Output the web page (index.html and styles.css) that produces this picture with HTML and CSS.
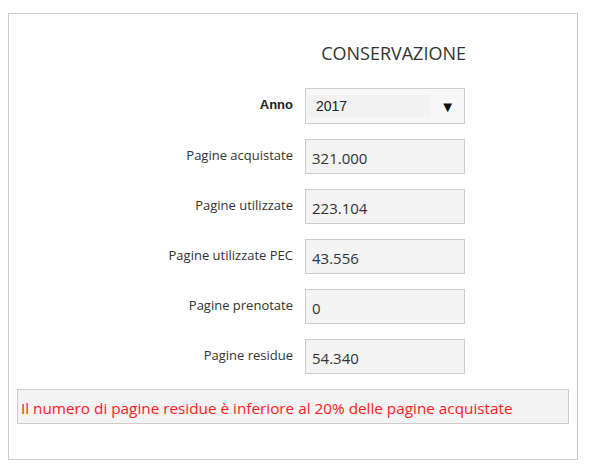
FILE: index.html
```html
<!DOCTYPE html>
<html lang="it">

<head>
    <meta charset="UTF-8">
    <meta name="viewport" content="width=device-width, initial-scale=1.0">
    <title>Conservazione</title>
    <link rel="stylesheet" href="styles.css">
</head>

<body>
    <div class="panel">
        <div class="form">
            <h2 class="title">CONSERVAZIONE</h2>

            <label class="label label-strong" for="anno">Anno</label>
            <div class="select" id="anno">
                <span class="select-value">2017</span>
                <span class="select-arrow">&#9660;</span>
            </div>

            <label class="label">Pagine acquistate</label>
            <div class="field">321.000</div>

            <label class="label">Pagine utilizzate</label>
            <div class="field">223.104</div>

            <label class="label">Pagine utilizzate PEC</label>
            <div class="field">43.556</div>

            <label class="label">Pagine prenotate</label>
            <div class="field">0</div>

            <label class="label">Pagine residue</label>
            <div class="field">54.340</div>
        </div>

        <div class="warning">Il numero di pagine residue è inferiore al 20% delle pagine acquistate</div>
    </div>
</body>

</html>
```

FILE: styles.css
```css
/* CSS Reset */
* {
    margin: 0;
    padding: 0;
    box-sizing: border-box;
}

body {
    font-family: 'Open Sans', sans-serif;
    background-color: #fff;
    color: #333;
}

.panel {
    margin: 13px 0 0 8px;
    width: 570px;
    height: 447px;
    border: 1px solid #ccc;
    padding: 0 8px;
}

.form {
    display: grid;
    grid-template-columns: 1fr 160px;
    column-gap: 12px;
    row-gap: 15px;
    padding-right: 104px;
}

.title {
    grid-column: 2;
    justify-self: end;
    margin: 27px -1px 8px 0;
    font-size: 18px;
    font-weight: 400;
    line-height: 24px;
    color: #333;
    white-space: nowrap;
}

.label {
    text-align: right;
    font-size: 13px;
    line-height: 18px;
    padding-top: 7px;
    color: #333;
}

.label-strong {
    font-family: 'Liberation Sans', sans-serif;
    font-weight: 600;
    color: #222;
    padding-top: 8px;
}

.select {
    height: 36px;
    border: 1px solid #ccc;
    background-color: #f7f7f7;
    display: flex;
    align-items: center;
    justify-content: space-between;
    padding: 0 9px 0 1px;
}

.select-value {
    font-family: 'Liberation Sans', sans-serif;
    font-size: 14px;
    line-height: 22px;
    width: 124px;
    padding-left: 9px;
    background-color: #f2f2f2;
    color: #222;
}

.select-arrow {
    font-size: 15px;
    color: #111;
}

.field {
    height: 35px;
    border: 1px solid #ccc;
    background-color: #f4f4f4;
    font-size: 15px;
    line-height: 33px;
    padding: 2px 6px 0;
    color: #333;
}

.warning {
    margin-top: 15px;
    height: 35px;
    border: 1px solid #ccc;
    background-color: #f4f4f4;
    color: #ff1a1a;
    font-size: 15.3px;
    line-height: 33px;
    padding: 2px 3px 0;
}
```
